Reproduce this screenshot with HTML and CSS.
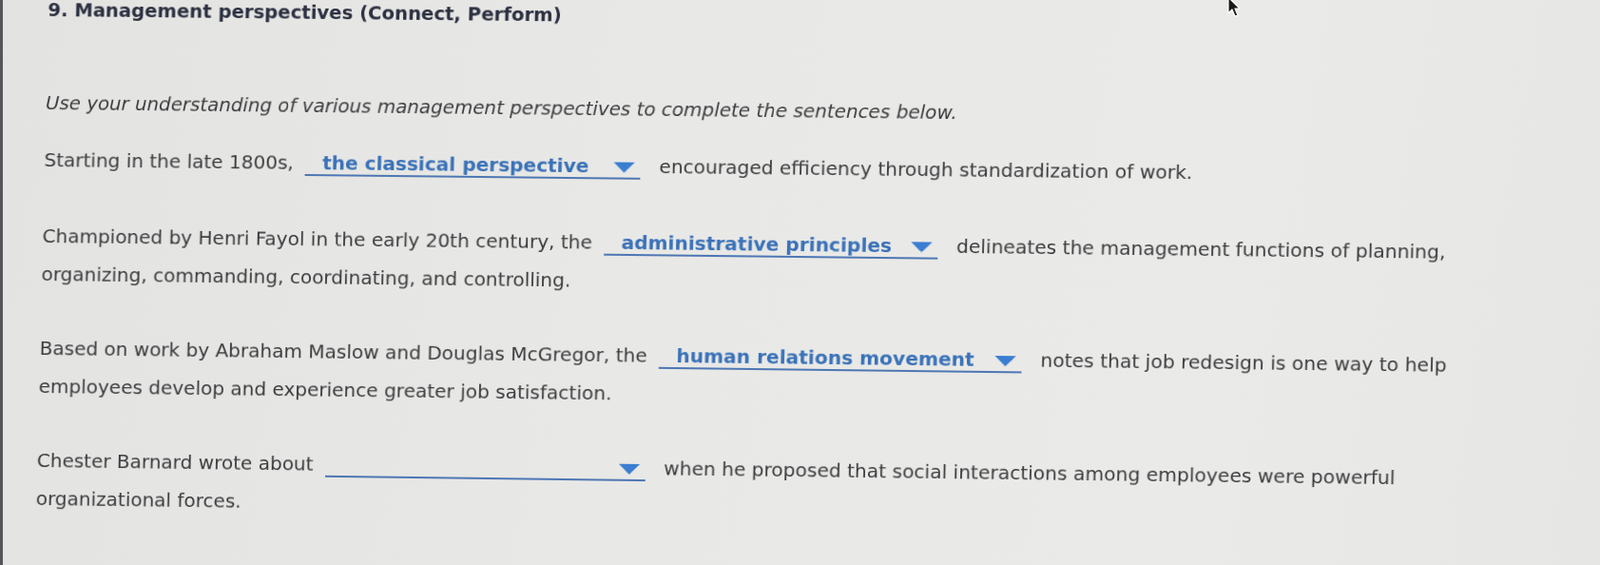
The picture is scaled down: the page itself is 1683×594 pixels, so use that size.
FILE: index.html
```html
<!DOCTYPE html>
<html lang="en">
<head>
<meta charset="utf-8">
<title>Management perspectives</title>
<link rel="stylesheet" href="styles.css">
</head>
<body>
<div class="screen">
  <div class="sheet">
    <h1 class="title">9. Management perspectives (Connect, Perform)</h1>
    <p class="intro">Use your understanding of various management perspectives to complete the sentences below.</p>
    <p class="q">Starting in the late 1800s, <span class="dd dd-1"><span class="dd-val">the classical perspective</span><svg class="dd-arrow" viewBox="0 0 22 11" width="22" height="11"><path d="M0 0H22L11 11Z"/></svg></span> encouraged efficiency through standardization of work.</p>
    <p class="q">Championed by Henri Fayol in the early 20th century, the <span class="dd dd-2"><span class="dd-val">administrative principles</span><svg class="dd-arrow" viewBox="0 0 22 11" width="22" height="11"><path d="M0 0H22L11 11Z"/></svg></span> delineates the management functions of planning, organizing, commanding, coordinating, and controlling.</p>
    <p class="q">Based on work by Abraham Maslow and Douglas McGregor, the <span class="dd dd-3"><span class="dd-val">human relations movement</span><svg class="dd-arrow" viewBox="0 0 22 11" width="22" height="11"><path d="M0 0H22L11 11Z"/></svg></span> notes that job redesign is one way to help employees develop and experience greater job satisfaction.</p>
    <p class="q">Chester Barnard wrote about <span class="dd dd-4"><span class="dd-val">&nbsp;</span><svg class="dd-arrow" viewBox="0 0 22 11" width="22" height="11"><path d="M0 0H22L11 11Z"/></svg></span> when he proposed that social interactions among employees were powerful organizational forces.</p>
  </div>
  <svg class="cursor" viewBox="0 0 16 24" width="16" height="24"><path d="M1 1V18L5 14L8 21L11 20L8 13H13Z" fill="#1a1a1a" stroke="#fff" stroke-width="1.2" stroke-linejoin="round"/></svg>
</div>
</body>
</html>
```
FILE: styles.css
```css
html, body {
  margin: 0;
  padding: 0;
  background: #e6e6e4;
}

.screen {
  position: relative;
  width: 1683px;
  height: 594px;
  box-sizing: border-box;
  overflow: hidden;
  border-left: 3px solid #55565a;
  background: linear-gradient(100deg, #e3e3e1 0%, #e8e8e6 40%, #eaeae8 75%, #e6e6e4 100%);
  font-family: "DejaVu Sans", Verdana, sans-serif;
  color: #3c3c3f;
}

.sheet {
  margin-left: 45px;
  width: 1532px;
  transform-origin: 0 107px;
  transform: perspective(3000px) rotateY(-1.03deg) rotate(0.6deg) skewX(-0.8deg);
}

.title {
  margin: 1px 0 0;
  font-size: 19.6px;
  line-height: 20px;
  font-weight: bold;
  color: #2c3040;
}

.intro {
  margin: 68px 0 19px;
  font-size: 19.8px;
  line-height: 40px;
  font-style: italic;
}

.q {
  margin: 0 0 38px;
  font-size: 20px;
  line-height: 40px;
}

.intro + .q {
  margin-bottom: 40px;
}

.dd {
  display: inline-flex;
  align-items: baseline;
  justify-content: space-between;
  box-sizing: border-box;
  padding: 0 6px 2px 18px;
  margin: 0 13px 0 6px;
  border-bottom: 2px solid #4d77b4;
  line-height: 20px;
  vertical-align: baseline;
}

.dd-1 { width: 351px; }
.dd-2 { width: 348px; }
.dd-3 { width: 378px; }
.dd-4 { width: 335px; }

.dd-val {
  font-weight: bold;
  color: #3a72b8;
}

.dd-arrow {
  align-self: baseline;
  margin-bottom: 2px;
  fill: #3a7ed2;
}

.cursor {
  position: absolute;
  left: 1288px;
  top: -4px;
}
```
